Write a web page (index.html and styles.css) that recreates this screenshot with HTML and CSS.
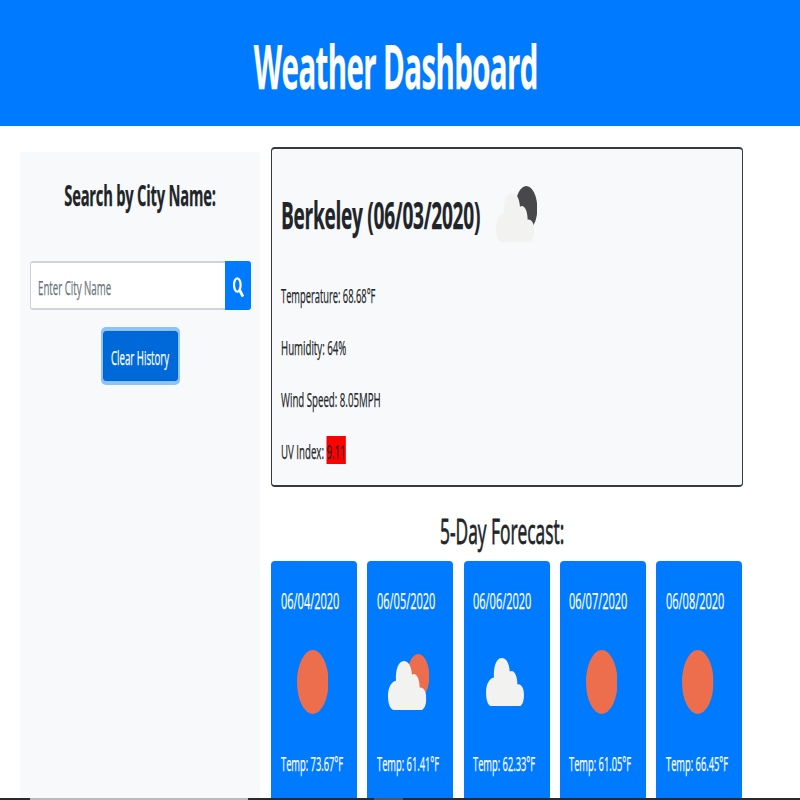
FILE: index.html
```html
<!DOCTYPE html>
<html lang="en">
<head>
<meta charset="utf-8">
<title>Weather Dashboard</title>
<link rel="stylesheet" href="styles.css">
</head>
<body>
<svg class="defs" aria-hidden="true">
  <symbol id="disc" viewBox="0 0 66 134"><ellipse cx="33" cy="67" rx="33" ry="67" fill="currentColor"/></symbol>
  <symbol id="cloud" viewBox="0 0 115 147"><path fill="#f2f2f0" d="M17 147C6 144 0 128 0 105C0 79 10 62 24 59C22 27 31 0 48 0C61 0 70 15 72 41C84 33 95 52 95 80C107 78 115 92 115 112C115 130 110 143 102 147Z"/></symbol>
</svg>
<header class="banner"><h1><span class="squeeze">Weather Dashboard</span></h1></header>
<main class="page">
  <aside class="sidebar">
    <h2 class="search-title"><span class="squeeze">Search by City Name:</span></h2>
    <div class="search">
      <div class="field"><span class="squeeze left wide">Enter City Name</span></div>
      <button class="go" aria-label="Search"><svg viewBox="0 0 11 21"><ellipse cx="4.3" cy="8" rx="3.3" ry="6.6" fill="none" stroke="#fff" stroke-width="2.2"/><path d="M6.8 13.5L10 19.5" stroke="#fff" stroke-width="2.8"/></svg></button>
    </div>
    <button class="clear"><span class="squeeze wide">Clear History</span></button>
  </aside>
  <section class="content">
    <article class="current">
      <div class="heading">
        <h2><span class="squeeze left">Berkeley (06/03/2020)</span></h2>
        <svg class="partly night" viewBox="0 0 124 168"><use href="#disc" x="58" y="0" width="66" height="134"/><use href="#cloud" x="0" y="21" width="115" height="147"/></svg>
      </div>
      <p><span class="squeeze left">Temperature: 68.68°F</span></p>
      <p><span class="squeeze left wide">Humidity: 64%</span></p>
      <p><span class="squeeze left wide">Wind Speed: 8.05MPH</span></p>
      <p><span class="squeeze left wide">UV Index: <mark>9.11</mark></span></p>
    </article>
    <h2 class="forecast-title"><span class="squeeze">5-Day Forecast:</span></h2>
    <div class="forecast">
      <article class="day"><h3><span class="squeeze left">06/04/2020</span></h3><div class="icon"><svg class="sun" viewBox="0 0 66 134"><use href="#disc"/></svg></div><p><span class="squeeze left">Temp: 73.67°F</span></p></article>
      <article class="day"><h3><span class="squeeze left">06/05/2020</span></h3><div class="icon"><svg class="partly" viewBox="0 0 124 168"><use href="#disc" x="58" y="0" width="66" height="134"/><use href="#cloud" x="0" y="21" width="115" height="147"/></svg></div><p><span class="squeeze left">Temp: 61.41°F</span></p></article>
      <article class="day"><h3><span class="squeeze left">06/06/2020</span></h3><div class="icon"><svg class="cloudy" viewBox="0 0 115 147"><use href="#cloud"/></svg></div><p><span class="squeeze left">Temp: 62.33°F</span></p></article>
      <article class="day"><h3><span class="squeeze left">06/07/2020</span></h3><div class="icon"><svg class="sun" viewBox="0 0 66 134"><use href="#disc"/></svg></div><p><span class="squeeze left">Temp: 61.05°F</span></p></article>
      <article class="day"><h3><span class="squeeze left">06/08/2020</span></h3><div class="icon"><svg class="sun" viewBox="0 0 66 134"><use href="#disc"/></svg></div><p><span class="squeeze left">Temp: 66.45°F</span></p></article>
    </div>
  </section>
</main>
<footer class="taskbar"><div class="task-search"></div><div class="task-item"></div></footer>
</body>
</html>
```
FILE: styles.css
```css
* { box-sizing: border-box; }
body {
  margin: 0;
  height: 800px;
  overflow: hidden;
  display: flex;
  flex-direction: column;
  background: #fff;
  color: #212529;
  font: 20px/30px "Open Sans", sans-serif;
}
h1, h2, h3, p { margin: 0; }
button { font: inherit; border: 0; padding: 0; }
.defs { display: none; }

.squeeze {
  --s: .466;
  display: inline-block;
  flex: none;
  white-space: nowrap;
  transform: scaleX(var(--s));
  -webkit-text-stroke: .25px currentColor;
}
.wide { --s: .484; }
.left { transform-origin: 0 50%; }

.banner { height: 126px; flex: none; background: #007bff; color: #fff; }
.banner h1 { display: flex; justify-content: center; padding-top: 26px; margin-right: 9px; font-size: 60px; line-height: 80px; }
.banner .squeeze { --s: .49; letter-spacing: -.02em; }

.page { flex: none; height: 672px; display: flex; overflow: hidden; padding-left: 20px; gap: 11px; }

.sidebar { width: 240px; margin-top: 26px; padding: 23px 9px 0 9.5px; background: #f8f9fa; display: flex; flex-direction: column; align-items: center; }
.search-title { width: 100%; display: flex; justify-content: center; font-size: 29px; line-height: 40px; margin-bottom: 46.4px; }
.search-title .squeeze { --s: .508; letter-spacing: -.015em; }
.search { width: 221.5px; height: 49px; display: flex; flex: none; }
.field { width: 195px; overflow: hidden; background: #fff; border: 1px solid #ced4da; border-width: 2px 0 2px 1px; border-radius: 3px 0 0 3px; padding: 10px 0 0 7.5px; color: #6c757d; }
.go { width: 26.5px; background: #007bff; border-radius: 0 3px 3px 0; display: flex; align-items: center; justify-content: center; }
.go svg { width: 11px; height: 21px; margin: 3px 0 0 1px; }
.clear { width: 75px; height: 50px; margin-top: 20.4px; background: #0069d9; border: 1px solid #0062cc; border-radius: 3px; color: #fff; display: flex; justify-content: center; align-items: center; padding-top: 5px; box-shadow: 0 0 0 2px #8dc3fc, 0 -2px 0 2px #8dc3fc, 0 2px 0 2px #8dc3fc; }

.content { width: 472px; padding-top: 21px; }
.current { height: 340px; border: 1px solid #343a40; border-width: 2px 1px; border-radius: 4px; background: #f8f9fa; padding: 36px 9px 0; display: flex; flex-direction: column; gap: 22px; }
.heading { height: 74px; display: flex; align-items: flex-start; }
.heading h2 { width: 215px; padding-top: 4px; font-size: 38px; line-height: 50px; }
.heading .squeeze { --s: .503; letter-spacing: -.015em; }
.current mark { display: inline-block; height: 28px; line-height: 31px; margin-top: -1px; background: red; color: #212529; }

.partly { width: 41.3px; height: 56px; color: #ec6e4c; }
.night { color: #48484a; margin-top: 1px; }
.sun { width: 31.5px; height: 64px; color: #ec6e4c; }
.cloudy { width: 38px; height: 48.5px; }

.forecast-title { height: 74px; padding-top: 23px; margin-right: 10px; display: flex; justify-content: center; font-size: 35px; line-height: 42px; font-weight: 400; }
.forecast-title .squeeze { --s: .496; -webkit-text-stroke-width: .8px; }
.forecast { display: grid; grid-template-columns: repeat(5, 1fr); gap: 10.2px; margin-right: .6px; }
.day { height: 300px; overflow: hidden; background: #007bff; color: #fff; border-radius: 4px 4px 0 0; padding: 24px 9.5px 0; }
.day h3 { font-size: 22px; font-weight: 400; line-height: 30px; }
.day h3 .squeeze { --s: .5; }
.icon { height: 134px; display: flex; align-items: center; justify-content: center; margin: 0 2px 0 -1px; }

.taskbar { height: 2px; flex: none; display: flex; background: #292a2e; padding-left: 30px; gap: 126px; }
.task-search { width: 218px; background: #bbb; }
.task-item { width: 29px; background: #55565a; }
```
